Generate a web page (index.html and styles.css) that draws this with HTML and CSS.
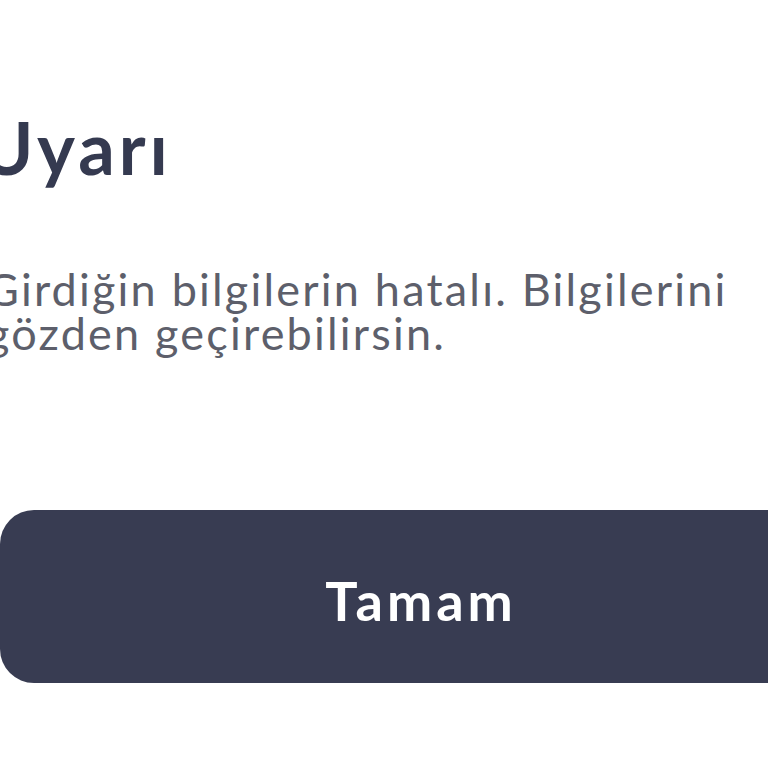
FILE: index.html
```
<!DOCTYPE html>
<html lang="tr">
<head>
<meta charset="utf-8">
<link rel="stylesheet" href="styles.css">
</head>
<body>
<div class="dialog">
  <h1 class="title">Uyarı</h1>
  <p class="message">Girdiğin bilgilerin hatalı. Bilgilerini<br>gözden geçirebilirsin.</p>
  <button class="ok">Tamam</button>
</div>
</body>
</html>
```
FILE: styles.css
```
html, body {
  margin: 0;
  padding: 0;
  width: 768px;
  height: 768px;
  overflow: hidden;
  background: #ffffff;
}
.dialog {
  display: flex;
  flex-direction: column;
  align-items: flex-start;
  margin-left: -20px;
  width: 862px;
  font-family: Lato, "Noto Sans", sans-serif;
}
.title {
  margin: 104px 0 0 0;
  font-size: 72px;
  line-height: 87px;
  font-weight: 700;
  color: #353a50;
  letter-spacing: 4px;
}
.message {
  margin: 76px 0 0 6px;
  font-size: 45px;
  line-height: 44px;
  font-weight: 400;
  color: #5d5f6b;
  letter-spacing: 2.2px;
  white-space: nowrap;
}
.ok {
  margin: 155px 0 0 20px;
  width: 842px;
  height: 173px;
  border: none;
  border-radius: 34px;
  background: #383c52;
  color: #ffffff;
  font-family: Lato, "Noto Sans", sans-serif;
  font-size: 54px;
  font-weight: 700;
  letter-spacing: 4px;
  padding: 8px 0 0 0;
}
```
